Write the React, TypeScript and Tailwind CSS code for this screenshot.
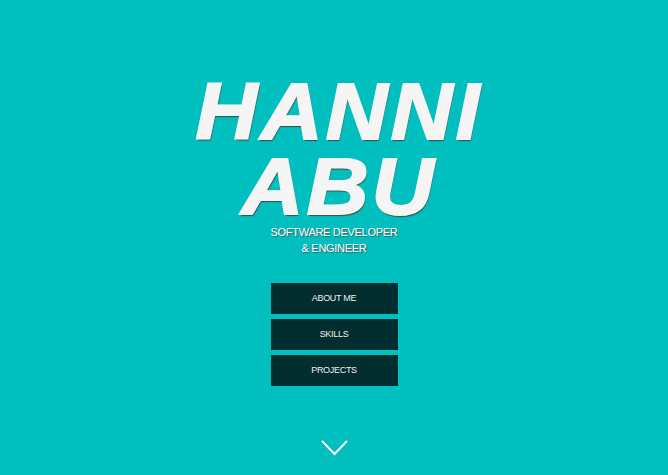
export default function App() {
  return (
    <div className="relative flex h-[475px] w-full flex-col items-center overflow-hidden bg-[#00bfbe] font-['Liberation_Sans',Arial,sans-serif]">
      <h1 className="mt-[74px] translate-x-[5px] scale-x-[1.07] text-center text-[80px] font-bold italic leading-[75px] tracking-[3px] text-[#f5f5f5] [-webkit-text-stroke:2px_#f5f5f5] [text-shadow:1px_2px_1px_#3a4a4a]">
        HANNI
        <br />
        ABU
      </h1>
      <p className="text-center text-[11px] leading-[16px] tracking-[-0.3px] text-white [text-shadow:1px_1px_1px_#555]">
        SOFTWARE DEVELOPER
        <br />& ENGINEER
      </p>
      <div className="mt-[27px] flex flex-col gap-[5px]">
        {['ABOUT ME', 'SKILLS', 'PROJECTS'].map((label) => (
          <button
            key={label}
            className="h-[31px] w-[127px] bg-[#032e2f] text-[9px] tracking-[-0.3px] text-[#eeeeee]"
          >
            {label}
          </button>
        ))}
      </div>
      <svg
        className="absolute left-[321px] top-[440px]"
        width="27"
        height="16"
        viewBox="0 0 27 16"
        fill="none"
        stroke="white"
        strokeWidth="2"
      >
        <path d="M1 1 L13.5 14 L26 1" />
      </svg>
    </div>
  );
}
